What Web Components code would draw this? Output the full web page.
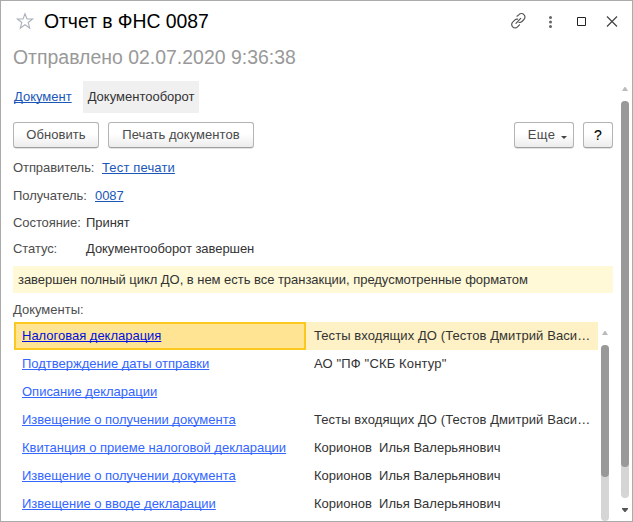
<!DOCTYPE html>
<html lang="ru">
<head>
<meta charset="utf-8">
<title>Отчет в ФНС 0087</title>
<style>
html, body { margin: 0; height: 100%; overflow: hidden; background: #fff; }
body { font: 13px/16px "Liberation Sans", Arial, sans-serif; color: #333; }
</style>
</head>
<body>
<report-window></report-window>
<script>
const define = (name, html, setup) => customElements.define(name, class extends HTMLElement {
  connectedCallback() {
    if (this.shadowRoot) return;
    const root = this.attachShadow({ mode: 'open' });
    const t = document.createElement('template');
    t.innerHTML = html;
    root.append(t.content.cloneNode(true));
    if (setup) setup(this, root);
  }
});

define('title-bar', `
<style>
:host { display: flex; align-items: center; height: 40px; padding: 0 11px 0 14px; box-sizing: border-box; }
h1 { margin: 0 auto 0 9px; font-size: 19.4px; line-height: 22px; font-weight: 400; color: #000; letter-spacing: -.05px; white-space: pre; }
svg { display: block; flex: none; }
.tools { display: flex; align-items: center; }
</style>
<svg width="20" height="20" viewBox="0 0 20 20" fill="none" stroke="#aab1ba" stroke-width="1.1" stroke-linejoin="miter"><path d="M10 2.7 12 8H17.6L13.2 11.5 14.7 17.2 10 13.8 5.3 17.2 6.8 11.5 2.4 8H8Z"/></svg>
<h1><slot></slot></h1>
<div class="tools">
<svg width="20" height="20" viewBox="0 0 20 20" fill="none" stroke="#555" stroke-width="1.2" stroke-linecap="round"><path d="M9 5.200 11 3.600a3.300 3.300 0 0 1 4.900 0a3.300 3.300 0 0 1 0 4.900L14 10.500a3.300 3.300 0 0 1-3 .9M11.500 13.800 9.500 15.900a3.300 3.300 0 0 1-4.800 0a3.300 3.300 0 0 1 0-4.800L6.700 9.100a3.300 3.300 0 0 1 3-.9M8 12.300 12.700 7.400"/></svg>
<svg width="20" height="20" viewBox="0 0 20 20" fill="#666" style="margin-left:12px"><circle cx="10.5" cy="6.500" r="1.500"/><circle cx="10.500" cy="11" r="1.500"/><circle cx="10.500" cy="15.500" r="1.500"/></svg>
<svg width="20" height="20" viewBox="0 0 20 20" fill="none" stroke="#222" style="margin-left:11px"><path d="M6.500 6.500H14.500V14.500H6.500Z"/></svg>
<svg width="20" height="20" viewBox="0 0 20 20" fill="none" stroke="#444" stroke-width="1.200" style="margin-left:10px"><path d="M6 5.500 16 15.500M16 5.500 6 15.500"/></svg>
</div>`);

define('tab-item', `
<style>
:host { display: block; height: 32px; line-height: 32px; white-space: nowrap; color: #1a57b8; text-decoration: underline; text-underline-offset: 1px; text-decoration-thickness: 1px; text-decoration-skip-ink: none; }
:host([active]) { background: #f0f0f0; color: #333; text-decoration: none; width: 106px; padding: 0 5px; }
</style><slot></slot>`);

define('push-button', `
<style>
:host { display: flex; align-items: center; justify-content: center; box-sizing: border-box; height: 26px; width: var(--w); border: 1px solid #b4b4b4; border-bottom-color: #a0a0a0; border-radius: 3px; box-shadow: 0 1px 0 -0.5px #c4c4c4; background: linear-gradient(#fff 45%, #ececec); color: #4a4a4a; white-space: nowrap; letter-spacing: .05px; }
:host([help]) { color: #000; font-size: 14px; -webkit-text-stroke: .15px #000; }
:host([menu]) { letter-spacing: .3px; }
svg { display: none; margin: 4px -7px 0 6px; }
:host([menu]) svg { display: block; }
</style><slot></slot><svg width="6" height="3" viewBox="0 0 6 3"><path d="M0 0H6L3 3Z" fill="#444"/></svg>`);

define('field-row', `
<style>
:host { display: flex; height: 16px; line-height: 16px; white-space: nowrap; }
.label { width: var(--lw); color: #4d4d4d; letter-spacing: -.08px; }
.value { color: #333; letter-spacing: -.06px; }
:host([link]) .value { color: #1a57b8; letter-spacing: var(--ls, .15px); text-decoration: underline; text-underline-offset: 1px; text-decoration-thickness: 1px; text-decoration-skip-ink: none; }
</style><span class="label"></span><span class="value"><slot></slot></span>`, (h, r) => {
  r.querySelector('.label').textContent = h.getAttribute('label');
});

define('doc-row', `
<style>
:host { display: grid; grid-template-columns: 292px 292px; height: 28px; line-height: 28px; white-space: pre; }
.name { padding-left: 8px; color: #3366ff; letter-spacing: -.01px; }
.name span { text-decoration: underline; text-underline-offset: 1px; text-decoration-thickness: 1px; text-decoration-skip-ink: none; }
.who { padding: 0 7px 0 8px; overflow: hidden; letter-spacing: var(--who-ls, 0); }
:host([selected]) { background: #fdf1c5; }
:host([selected]) .name { box-sizing: border-box; height: 28px; line-height: 24px; padding-left: 6px; border: 2px solid #fac81e; background: #ffe593; color: #0010e0; }
</style><div class="name"><span><slot></slot></span></div><div class="who"></div>`, (h, r) => {
  r.querySelector('.who').textContent = h.getAttribute('who') || '';
});

define('scroll-bar', `
<style>
:host { display: flex; flex-direction: column; align-items: center; width: 8px; }
svg { display: block; flex: none; }
.track { flex: none; width: 8px; height: var(--track); border-radius: 4px; background: #d5d5d5; margin-top: 10px; }
.thumb { height: var(--thumb); border-radius: 4px; background: #999; }
.down { display: none; margin-top: 10px; }
:host([down]) .down { display: block; }
</style>
<svg width="6" height="4" viewBox="0 0 6 4"><path d="M0 4 2.500 0H3.500L6 4Z" fill="#bbb"/></svg>
<div class="track"><div class="thumb"></div></div>
<svg class="down" width="6" height="4" viewBox="0 0 6 4"><path d="M0 0H6V1L3.500 4H2.500L0 1Z" fill="#555"/></svg>`);

define('report-window', `
<style>
:host { display: flex; flex-direction: column; box-sizing: border-box; width: 633px; height: 522px; border: 1px solid #aaa; background: #fff; overflow: hidden; }
title-bar { flex: none; }
.sub { height: 24px; margin: 4px 0 0 12px; padding-bottom: 12px; font-size: 19.4px; line-height: 24px; color: #999; white-space: pre; letter-spacing: .03px; }
.body { display: flex; flex: 1; min-height: 0; }
main { width: 600px; margin-left: 12px; }
.tabs { display: flex; gap: 11px; padding-left: 1px; }
.bar { display: flex; gap: 9px; margin-top: 9px; }
.gap { flex: 1; }
.fields { padding-top: 12px; }
.notice { height: 27px; line-height: 27px; margin-top: 9px; padding-left: 5px; background: #fff9d7; white-space: nowrap; letter-spacing: -.035px; }
.caption { line-height: 16px; margin-top: 9px; color: #4d4d4d; }
.list { display: flex; height: 199px; overflow: hidden; padding-left: 1px; margin-top: 4px; }
.rows { width: 584px; }
.list scroll-bar { margin: 9px 0 0 3px; }
.body > scroll-bar { margin: 6px 0 0 8px; }
.wide { --who-ls: .08px; }
</style>
<title-bar>Отчет в ФНС 0087</title-bar>
<div class="sub">Отправлено 02.07.2020 9:36:38</div>
<div class="body">
<main>
<div class="tabs"><tab-item>Документ</tab-item><tab-item active>Документооборот</tab-item></div>
<div class="bar"><push-button style="--w:86px">Обновить</push-button><push-button style="--w:146px">Печать документов</push-button><span class="gap"></span><push-button menu style="--w:60px">Еще</push-button><push-button help style="--w:30px">?</push-button></div>
<div class="fields">
<field-row link label="Отправитель:" style="--lw:89px">Тест печати</field-row>
<field-row link label="Получатель:" style="--lw:82px;--ls:-.1px;margin-top:12px">0087</field-row>
<field-row label="Состояние:" style="--lw:73px;margin-top:11px">Принят</field-row>
<field-row label="Статус:" style="--lw:73px;margin-top:10px">Документооборот завершен</field-row>
</div>
<div class="notice">завершен полный цикл ДО, в нем есть все транзакции, предусмотренные форматом</div>
<div class="caption">Документы:</div>
<div class="list"><div class="rows">
<doc-row class="wide" selected who="Тесты входящих ДО (Тестов Дмитрий Васи…">Налоговая декларация</doc-row>
<doc-row style="--who-ls:.15px" who='АО "ПФ "СКБ Контур"'>Подтверждение даты отправки</doc-row>
<doc-row>Описание декларации</doc-row>
<doc-row class="wide" who="Тесты входящих ДО (Тестов Дмитрий Васи…">Извещение о получении документа</doc-row>
<doc-row who="Корионов  Илья Валерьянович">Квитанция о приеме налоговой декларации</doc-row>
<doc-row who="Корионов  Илья Валерьянович">Извещение о получении документа</doc-row>
<doc-row who="Корионов  Илья Валерьянович">Извещение о вводе декларации</doc-row>
</div><scroll-bar style="--track:176px;--thumb:132px"></scroll-bar></div>
</main>
<scroll-bar down style="--track:397px;--thumb:366px"></scroll-bar>
</div>`);
</script>
</body>
</html>
